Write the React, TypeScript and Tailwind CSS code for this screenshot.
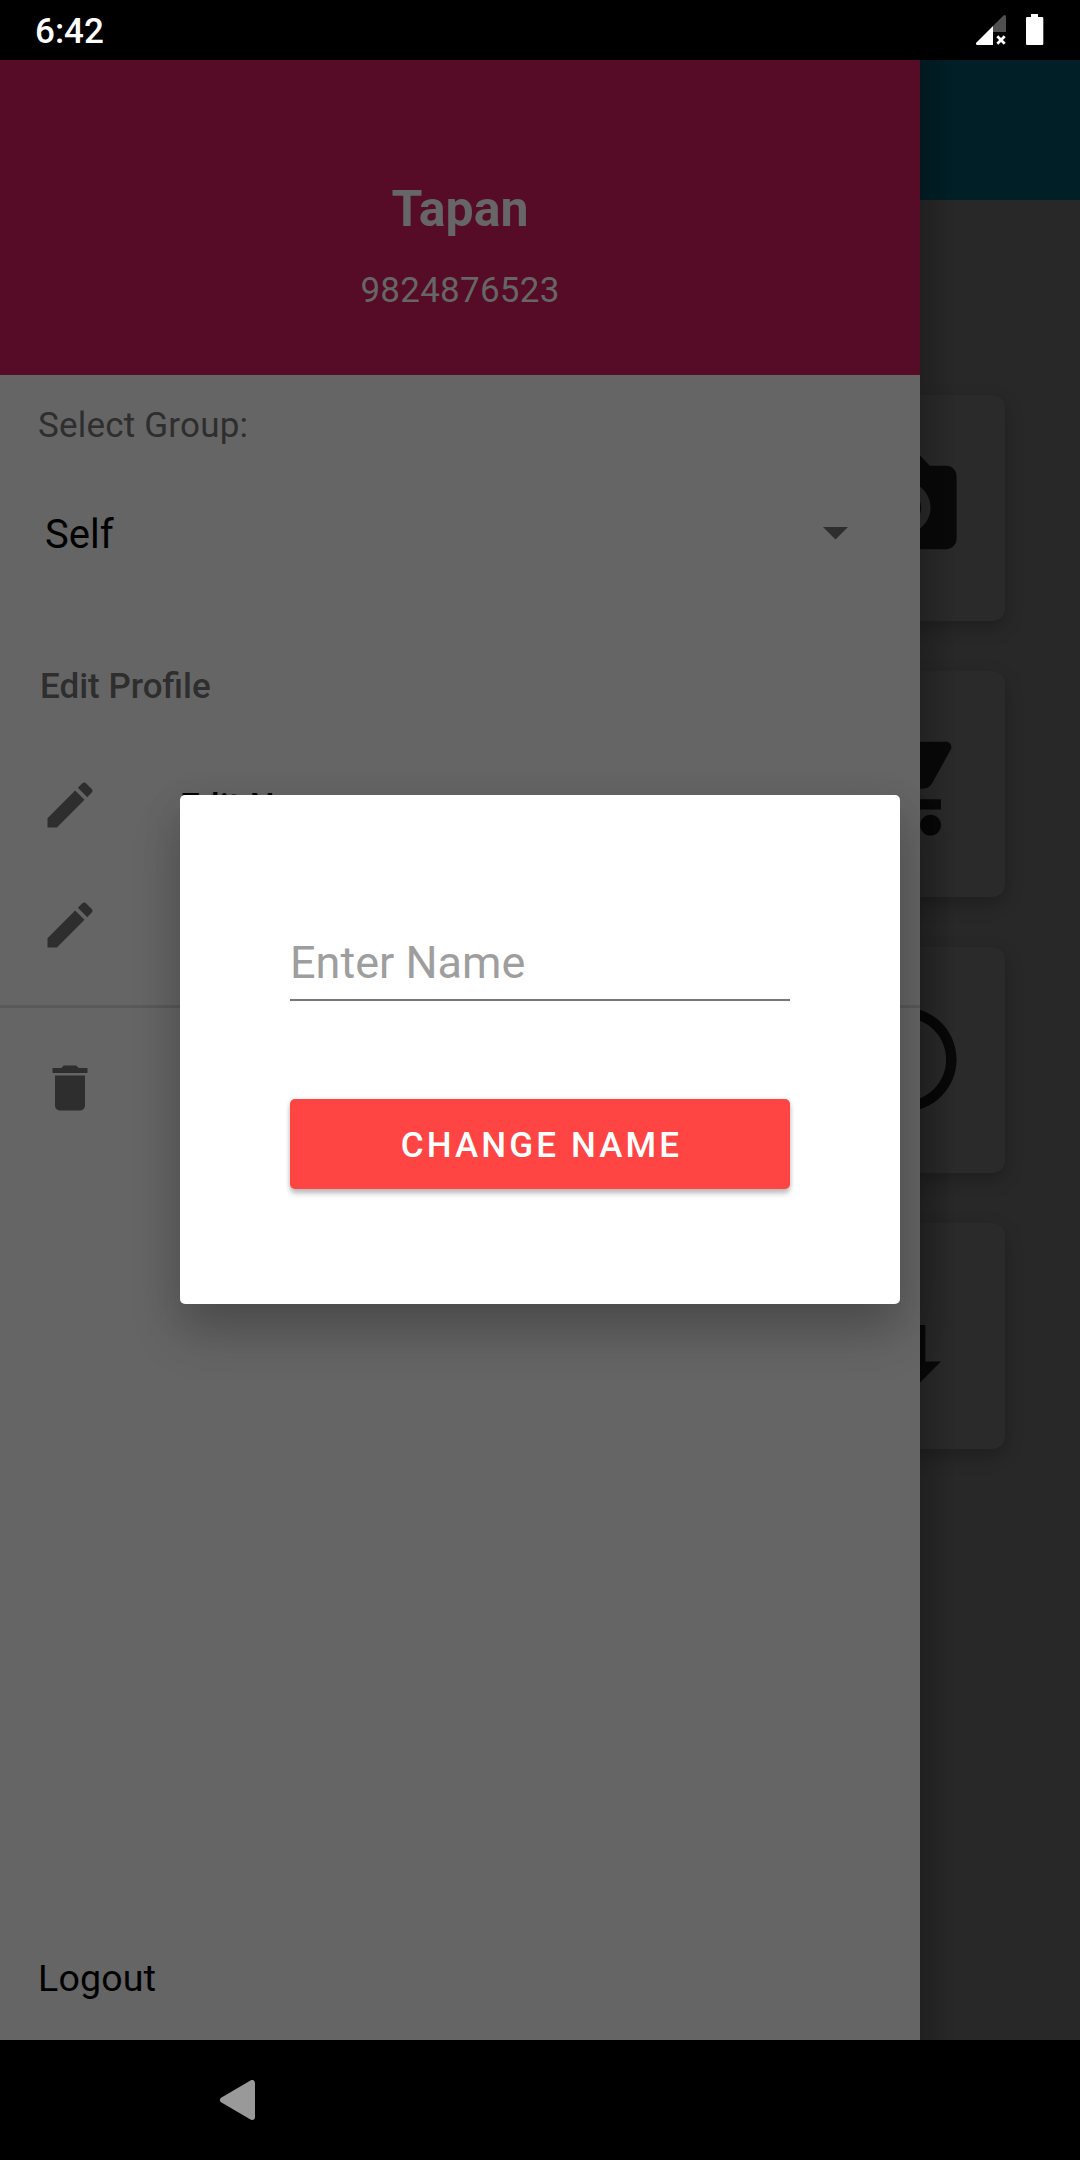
import React from "react";

const CAMERA =
  "M9 2 7.17 4H4c-1.1 0-2 .9-2 2v12c0 1.1.9 2 2 2h16c1.1 0 2-.9 2-2V6c0-1.1-.9-2-2-2h-3.17L15 2H9zm3 15c-2.76 0-5-2.24-5-5s2.24-5 5-5 5 2.24 5 5-2.24 5-5 5zM12 8.8a3.2 3.2 0 1 0 0 6.4 3.2 3.2 0 1 0 0-6.4z";
const CART =
  "M7 18c-1.1 0-1.99.9-1.99 2S5.9 22 7 22s2-.9 2-2-.9-2-2-2zM1 2v2h2l3.6 7.59-1.35 2.45c-.16.28-.25.61-.25.96 0 1.1.9 2 2 2h12v-2H7.42c-.14 0-.25-.11-.25-.25l.03-.12.9-1.63h7.45c.75 0 1.41-.41 1.75-1.03l3.58-6.49c.08-.14.12-.31.12-.48 0-.55-.45-1-1-1H5.21l-.94-2H1zm16 16c-1.1 0-1.99.9-1.99 2s.89 2 1.99 2 2-.9 2-2-.9-2-2-2z";
const CLOCK =
  "M11.99 2C6.47 2 2 6.48 2 12s4.47 10 9.99 10C17.52 22 22 17.52 22 12S17.52 2 11.99 2zM12 20c-4.42 0-8-3.58-8-8s3.58-8 8-8 8 3.58 8 8-3.58 8-8 8z";
const SWAP =
  "M16 17.01V10h-2v7.01h-3L15 21l4-3.99h-3zM9 3L5 6.99h3V14h2V6.99h3L9 3z";
const PENCIL =
  "M3 17.25V21h3.75L17.81 9.94l-3.75-3.75L3 17.25zM20.71 7.04c.39-.39.39-1.02 0-1.41l-2.34-2.34c-.39-.39-1.02-.39-1.41 0l-1.83 1.83 3.75 3.75 1.83-1.83z";
const TRASH =
  "M6 19c0 1.1.9 2 2 2h8c1.1 0 2-.9 2-2V7H6v12zM19 4h-3.5l-1-1h-5l-1 1H5v2h14V4z";

function Icon({ d, className }: { d: string; className: string }) {
  return (
    <svg viewBox="0 0 24 24" className={className} fill="currentColor" fillRule="evenodd">
      <path d={d} />
    </svg>
  );
}

function StatusBar() {
  return (
    <header className="flex h-[60px] shrink-0 items-center justify-between bg-black pl-[35px] pr-[36px] text-white">
      <span className="pt-[4px] text-[35px] font-medium leading-[40px]">6:42</span>
      <div className="flex items-center gap-[19px]">
        <svg width="32" height="60" viewBox="975 0 32 60">
          <path d="M993 26 L1003.5 15.5 Q1006 14 1006 17 V32 H993z" fill="#505050" />
          <path d="M993 26 V45 H977.5 Q975 44.500 976.500 42.500z" fill="#fff" />
          <path d="M997.300 36.300l7.400 7.400M1004.700 36.300l-7.400 7.400" stroke="#fff" strokeWidth="2.700" />
        </svg>
        <svg width="18" height="60" viewBox="1026 0 18 60" fill="#fff">
          <path d="M1031 14h7v3h4q1.300 0 1.300 1.300v25.400q0 1.300-1.300 1.300h-14.700q-1.300 0-1.300-1.300v-25.400q0-1.300 1.300-1.300h3.700z" />
        </svg>
      </div>
    </header>
  );
}

function HomePage() {
  return (
    <div className="flex h-full flex-col bg-[#282828]">
      <div className="h-[140px] shrink-0 bg-[#001f26]" />
      <div className="flex flex-col items-end gap-[50px] pr-[75px] pt-[195px]">
        {[CAMERA, CART, CLOCK, SWAP].map((d) => (
          <div
            key={d}
            className="flex h-[226px] w-[201px] items-center justify-center rounded-[13px] bg-[#2a2a2a] pb-[2px] shadow-[0_7px_18px_rgba(0,0,0,0.24)]"
          >
            <Icon d={d} className="size-[125px] text-[#080808]" />
          </div>
        ))}
      </div>
    </div>
  );
}

function Drawer() {
  return (
    <aside className="absolute left-0 top-0 flex h-full w-[920px] flex-col bg-[#656565]">
      <div className="flex h-[315px] shrink-0 flex-col items-center bg-[#560b26] pt-[119px] text-[#666666]">
        <h1 className="text-[50px] font-bold leading-[60px]">Tapan</h1>
        <p className="mt-[32px] text-[35px] leading-[40px] tracking-[0.25px]">9824876523</p>
      </div>
      <p className="mt-[31px] pl-[38px] text-[35px] leading-[40px] tracking-[0.2px] text-[#2e2e2e]">Select Group:</p>
      <div className="mt-[64px] flex items-center justify-between pl-[45px] pr-[72px] text-[40px] leading-[50px] text-black">
        <span>Self</span>
        <svg width="25" height="13" viewBox="0 0 25 13" className="mb-[4px]">
          <path d="M0 0h25L12.500 12.500z" fill="#2e2e2e" />
        </svg>
      </div>
      <p className="mt-[107px] pl-[40px] text-[35px] font-medium leading-[40px] text-[#2e2e2e]">Edit Profile</p>
      <div className="mt-[38px] flex h-[120px] items-center pl-[40px]">
        <Icon d={PENCIL} className="size-[60px] text-[#2e2e2e]" />
        <span className="ml-[80px] pt-[3px] text-[35px] font-medium leading-[40px] tracking-[0.25px] text-black">
          Edit Name
        </span>
      </div>
      <div className="flex h-[120px] items-center pl-[40px]">
        <Icon d={PENCIL} className="size-[60px] text-[#2e2e2e]" />
      </div>
      <div className="mt-[20px] h-[3px] bg-[#595959]" />
      <div className="mt-[19.500px] flex h-[120px] items-center pl-[40px]">
        <Icon d={TRASH} className="size-[60px] text-[#2e2e2e]" />
      </div>
      <p className="mb-[37px] mt-auto pl-[38px] text-[37.500px] leading-[50px] tracking-[0.2px] text-black">Logout</p>
      <div className="absolute left-full top-0 h-full w-[36px] bg-linear-to-r from-black/20 to-transparent" />
    </aside>
  );
}

function NameDialog() {
  return (
    <div className="absolute left-[180px] top-[735px] flex h-[509px] w-[720px] flex-col rounded-[5px] bg-white px-[110px] shadow-[0_30px_50px_rgba(0,0,0,0.2),0_10px_40px_rgba(0,0,0,0.1)]">
      <div className="mt-[138px] h-[68px] border-b-[2.500px] border-[#767676] text-[45px] leading-[60px] text-[#9e9e9e]">
        Enter Name
      </div>
      <button className="mt-[98px] h-[90px] rounded-[5px] bg-[#ff4444] pl-[3px] pt-[3px] text-center text-[35px] font-medium leading-[87px] tracking-[3.125px] text-white shadow-[0_5px_5px_rgba(0,0,0,0.2),0_1px_5px_rgba(0,0,0,0.15)]">
        CHANGE NAME
      </button>
    </div>
  );
}

function NavigationBar() {
  return (
    <nav className="flex h-[120px] shrink-0 items-center bg-black pl-[220px]">
      <svg width="36" height="40" viewBox="0 0 36 40">
        <path
          d="M3 20 L32 3 V37z"
          fill="#999"
          stroke="#999"
          strokeWidth="6"
          strokeLinejoin="round"
        />
      </svg>
    </nav>
  );
}

export default function App() {
  return (
    <div className="flex h-[2160px] w-[1080px] flex-col overflow-hidden bg-black font-['Roboto',sans-serif]">
      <StatusBar />
      <main className="relative h-[1980px] overflow-hidden">
        <HomePage />
        <Drawer />
        <NameDialog />
      </main>
      <NavigationBar />
    </div>
  );
}
